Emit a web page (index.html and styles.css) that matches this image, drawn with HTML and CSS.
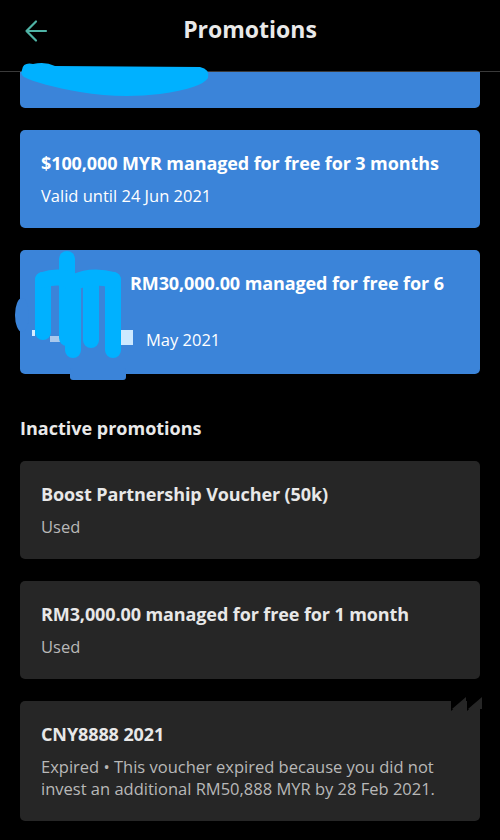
FILE: index.html
```html
<!DOCTYPE html>
<html lang="en">
<head>
    <meta charset="UTF-8">
    <meta name="viewport" content="width=device-width, initial-scale=1.0">
    <title>Promotions</title>
    <link rel="stylesheet" href="styles.css">
</head>
<body>
    <header class="topbar">
        <button class="back" aria-label="Back">
            <svg width="24" height="24" viewBox="0 0 24 24">
                <path d="M22 12H2.5M12 2.5L2.5 12l9.5 9.5" fill="none" stroke="#4fb3a5" stroke-width="2.2" stroke-linecap="round" stroke-linejoin="round"/>
            </svg>
        </button>
        <h1>Promotions</h1>
    </header>

    <!-- redaction marker drawn over the header line -->
    <svg class="scribble scribble-top" width="220" height="100" viewBox="0 0 220 100">
        <path d="M22 70 Q23 62 33 64 Q45 61 55 66 L200 67 Q210 69 208 78 Q202 88 160 94 Q120 99 80 92 Q40 85 24 77 Q20 74 22 70Z" fill="#00b1ff"/>
    </svg>

    <main class="list">
        <div class="card card-active card-first">
            <div class="card-title">&nbsp;</div>
        </div>

        <div class="card card-active">
            <div class="card-title">$100,000 MYR managed for free for 3 months</div>
            <div class="card-sub">Valid until 24 Jun 2021</div>
        </div>

        <div class="card card-active card-edited">
            <div class="card-title indent-title">RM30,000.00 managed for free for 6</div>
            <div class="card-gap"></div>
            <div class="card-sub indent-sub">May 2021</div>
            <!-- redaction marker -->
            <svg class="scribble scribble-side" width="130" height="140" viewBox="-10 0 130 140">
                <ellipse cx="2" cy="65" rx="7" ry="17" fill="#3b84d9"/>
                <rect x="50" y="118" width="56" height="12" rx="3" fill="#3b84d9"/>
                <rect x="98" y="80" width="15" height="15" fill="#cde9ff"/>
                <rect x="12" y="80" width="3" height="6" fill="#d8ecff"/>
                <rect x="30" y="86" width="14" height="6" fill="#a9c8ec"/>
                <g stroke="#00b1ff" stroke-width="16" stroke-linecap="round" fill="none">
                    <path d="M23 30V82"/>
                    <path d="M47 9V88"/>
                    <path d="M53 40V100"/>
                    <path d="M71 30V90"/>
                    <path d="M93 30V100"/>
                    <path d="M23 30Q40 24 55 32Q72 24 93 30"/>
                </g>
            </svg>
        </div>

        <h2 class="section-title">Inactive promotions</h2>

        <div class="card card-inactive">
            <div class="card-title">Boost Partnership Voucher (50k)</div>
            <div class="card-sub">Used</div>
        </div>

        <div class="card card-inactive">
            <div class="card-title">RM3,000.00 managed for free for 1 month</div>
            <div class="card-sub">Used</div>
        </div>

        <div class="card card-inactive">
            <div class="card-title">CNY8888 2021</div>
            <div class="card-sub">Expired • This voucher expired because you did not invest an additional RM50,888 MYR by 28 Feb 2021.</div>
            <svg class="notch" width="32" height="16" viewBox="0 0 32 16">
                <path d="M0 0H32V16L31 16V0L16 14V0L0 14Z" fill="#000"/>
                <path d="M1 12L15 0V12ZM17 12L31 0V12Z" fill="#262626"/>
            </svg>
        </div>
    </main>
</body>
</html>
```

FILE: styles.css
```css
body {
    position: relative;
    margin: 0;
    background-color: #000000;
    font-family: "Open Sans", "Noto Sans", Arial, sans-serif;
    color: #ffffff;
    height: 840px;
    overflow: hidden;
}
.topbar {
    position: relative;
    display: flex;
    align-items: center;
    justify-content: center;
    height: 72px;
    padding-bottom: 14px;
    box-sizing: border-box;
    border-bottom: 1px solid #3a3a3a;
    background: #000000;
    z-index: 2;
}
.topbar h1 {
    margin: 0;
    font-size: 23px;
    font-weight: 700;
    color: #e9e9e9;
    line-height: 30px;
}
.back {
    position: absolute;
    left: 24px;
    top: 19px;
    padding: 0;
    background: none;
    border: none;
    display: flex;
}
.list {
    height: 768px;
    overflow: hidden;
    padding: 0 20px;
    display: flex;
    flex-direction: column;
}
.card {
    position: relative;
    flex: none;
    border-radius: 5px;
    padding: 21px 21px;
    margin-bottom: 22px;
}
.card-active {
    background-color: #3b84d9;
}
.card-inactive {
    background-color: #262626;
}
.card-first {
    height: 98px;
    box-sizing: border-box;
    margin-top: -62px;
}
.card-title {
    font-size: 18px;
    font-weight: 700;
    line-height: 24px;
    letter-spacing: -0.1px;
}
.card-sub {
    margin-top: 10px;
    font-size: 16.5px;
    line-height: 22px;
}
.card-active .card-title,
.card-active .card-sub {
    color: #ffffff;
}
.card-inactive .card-title {
    color: #e8e8e8;
}
.card-inactive .card-sub {
    color: #b8b8b8;
}
.card-edited {
    height: 124px;
    box-sizing: border-box;
}
.indent-title {
    padding-left: 89px;
}
.indent-sub {
    padding-left: 105px;
}
.card-gap {
    height: 24px;
}
.section-title {
    margin: 19px 0 20px;
    font-size: 18px;
    font-weight: 700;
    line-height: 26px;
    color: #e9e9e9;
}
.scribble {
    position: absolute;
}
.scribble-top {
    left: 0;
    top: 0;
    z-index: 3;
}
.scribble-side {
    left: -10px;
    top: 0;
}
.notch {
    position: absolute;
    right: -3px;
    top: -4px;
}
```
